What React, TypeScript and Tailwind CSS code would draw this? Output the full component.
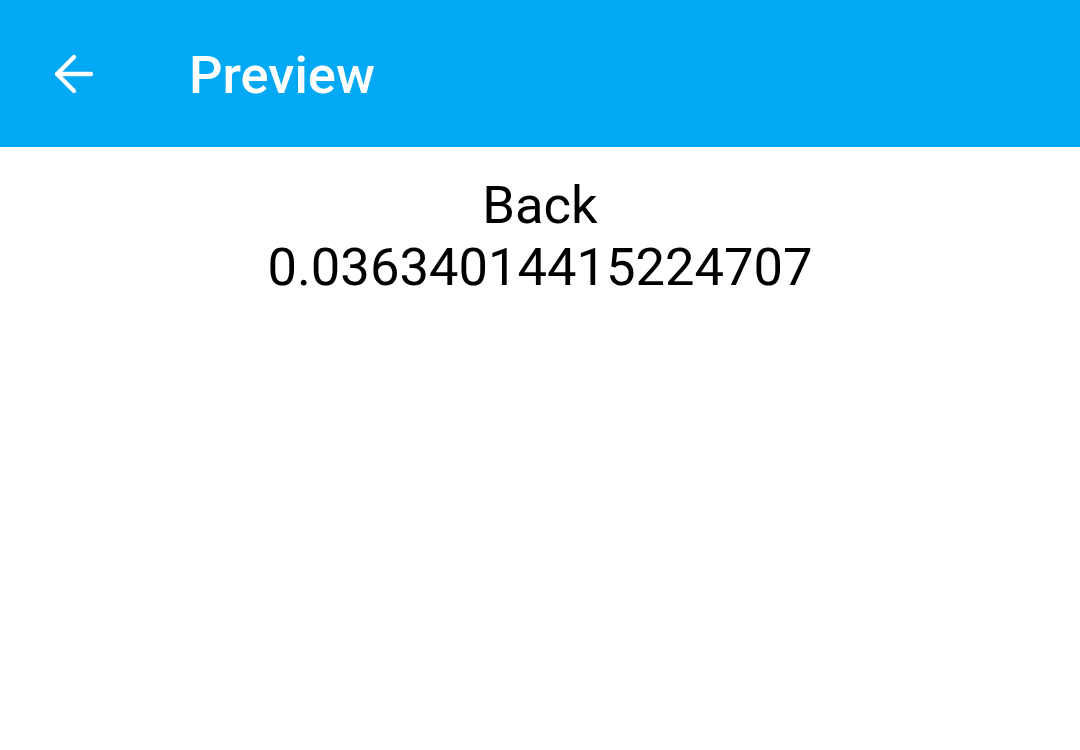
import {ArrowLeft} from 'lucide-react'

function App() {
    return (
        <div className="min-h-screen bg-white" style={{fontFamily: 'Roboto, "Noto Sans", sans-serif'}}>
            <header className="h-[147px] bg-[#03a9f4] flex items-center">
                <button className="ml-[42px] w-[63px] h-[63px] flex items-center justify-center text-white">
                    <ArrowLeft size={58} strokeWidth={1.8} />
                </button>
                <h1 className="ml-[84px] mt-[4px] text-white text-[52.5px] font-medium leading-none">Preview</h1>
            </header>
            <main className="flex flex-col items-center pt-[27px] text-black text-[52.5px] leading-[62px]">
                <p>Back</p>
                <p>0.03634014415224707</p>
            </main>
        </div>
    )
}

export default App
